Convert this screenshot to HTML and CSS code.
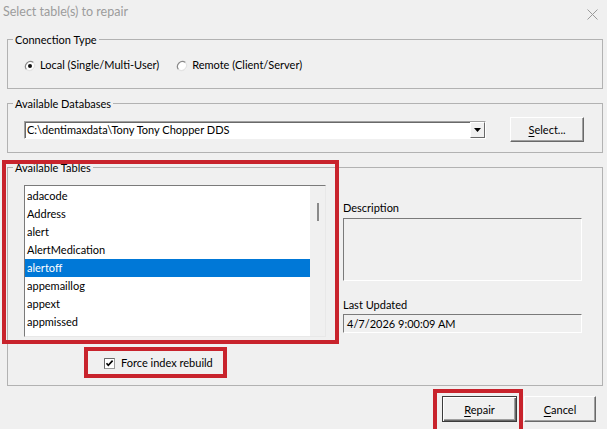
FILE: index.html
```html
<!DOCTYPE html>
<html>
<head>
<meta charset="utf-8">
<link rel="stylesheet" href="styles.css">
</head>
<body>
<div class="window">
  <div class="titlebar">
    <span class="title">Select table(s) to repair</span>
    <svg class="close" width="11" height="11" viewBox="0 0 11 11"><path d="M0.5 0.5L10.5 10.5M10.5 0.5L0.5 10.5" stroke="#9a9a9a" stroke-width="1" fill="none"/></svg>
  </div>
  <div class="content">
    <fieldset class="group g1">
      <legend>Connection Type</legend>
      <div class="radios">
        <label class="radio"><svg class="rb" width="12" height="12" viewBox="0 0 12 12"><circle cx="6" cy="6" r="5" fill="#fff"/><path d="M2.5 9.5A5 5 0 0 1 9.5 2.5" stroke="#8a8a8a" stroke-width="1.2" fill="none"/><path d="M9.5 2.5A5 5 0 0 1 2.5 9.5" stroke="#e4e4e4" stroke-width="1.2" fill="none"/><circle cx="6" cy="6" r="2" fill="#111"/></svg>Local (Single/Multi-User)</label>
        <label class="radio"><svg class="rb" width="12" height="12" viewBox="0 0 12 12"><circle cx="6" cy="6" r="5" fill="#fff"/><path d="M2.5 9.5A5 5 0 0 1 9.5 2.5" stroke="#8a8a8a" stroke-width="1.2" fill="none"/><path d="M9.5 2.5A5 5 0 0 1 2.5 9.5" stroke="#e4e4e4" stroke-width="1.2" fill="none"/></svg>Remote (Client/Server)</label>
      </div>
    </fieldset>
    <fieldset class="group g2">
      <legend>Available Databases</legend>
      <div class="dbrow">
        <div class="combo">
          <span class="combo-text">C:\dentimaxdata\Tony Tony Chopper DDS</span>
          <span class="combo-btn"><svg width="7" height="4" viewBox="0 0 7 4"><path d="M0 0H7L3.5 4Z" fill="#000"/></svg></span>
        </div>
        <button class="btn select"><u>S</u>elect...</button>
      </div>
    </fieldset>
    <fieldset class="group g3">
      <legend>Available Tables</legend>
      <div class="tables">
        <div class="listbox">
          <ul class="items">
            <li>adacode</li>
            <li>Address</li>
            <li>alert</li>
            <li>AlertMedication</li>
            <li class="sel">alertoff</li>
            <li>appemaillog</li>
            <li>appext</li>
            <li>appmissed</li>
          </ul>
          <div class="vscroll"><span class="thumb"></span></div>
        </div>
        <div class="details">
          <div class="lbl">Description</div>
          <div class="field desc"></div>
          <div class="lbl lbl2">Last Updated</div>
          <div class="field upd">4/7/2026 9:00:09 AM</div>
        </div>
      </div>
      <label class="check"><svg class="cb" width="11" height="11" viewBox="0 0 11 11"><rect x="0.5" y="0.5" width="10" height="10" fill="#fff" stroke="#9a9a9a"/><path d="M0.5 10.5V0.5H10.5" stroke="#6a6a6a" fill="none"/><path d="M2.5 5.2L4.3 7.3L8.6 2.6" stroke="#000" stroke-width="1.6" fill="none"/></svg>Force index rebuild</label>
    </fieldset>
    <div class="buttons">
      <button class="btn default"><u>R</u>epair</button>
      <button class="btn cancel"><u>C</u>ancel</button>
    </div>
  </div>
  <div class="mark m1"></div>
  <div class="mark m2"></div>
  <div class="mark m3"></div>
</div>
</body>
</html>
```
FILE: styles.css
```css
* { box-sizing: border-box; }
html, body { margin: 0; padding: 0; }
body {
  width: 607px;
  height: 429px;
  overflow: hidden;
  background: #f0f0f0;
  font-family: "Lato", "Noto Sans", "Liberation Sans", sans-serif;
  font-size: 11px;
  color: #000;
}
.window {
  position: relative;
  width: 607px;
  height: 429px;
  overflow: hidden;
  background: #f0f0f0;
}
.titlebar {
  height: 30px;
  display: flex;
  align-items: flex-start;
  justify-content: space-between;
  padding: 3px 9px 0 3px;
}
.title {
  font-size: 12.5px;
  line-height: 18px;
  color: #9c9c9c;
}
.close { margin-top: 6px; }
.content {
  padding: 0 4px 0 7px;
  display: flex;
  flex-direction: column;
}
.group {
  margin: 0;
  border: 1px solid #b2b2b2;
  padding: 0 18px 0 16px;
  min-width: 0;
}
.group legend {
  padding: 2px 2px 0;
  margin-left: -11px;
  line-height: 16px;
}
.g1 { padding-top: 9px; padding-bottom: 15px; }
.g2 { margin-top: 5px; padding-top: 5px; padding-bottom: 10px; }
.g3 { margin-top: 5px; padding-top: 9px; padding-bottom: 14px; }

.radios { display: flex; align-items: center; height: 16px; gap: 17px; }
.radio { display: flex; align-items: center; gap: 4px; line-height: 16px; }
.rb { display: block; margin-top: 1px; }

.dbrow { display: flex; align-items: center; height: 25px; }
.combo {
  width: 463px;
  height: 18px;
  background: #fff;
  border-top: 1px solid #a0a0a0;
  border-left: 1px solid #a0a0a0;
  border-right: 1px solid #fff;
  border-bottom: 1px solid #fff;
  box-shadow: inset 1px 1px 0 #696969;
  display: flex;
  align-items: center;
  justify-content: space-between;
  padding-left: 2px;
}
.combo-text { line-height: 16px; white-space: nowrap; }
.combo-btn {
  width: 15px;
  height: 16px;
  background: #f0f0f0;
  border: 1px solid;
  border-color: #fff #696969 #696969 #fff;
  display: flex;
  align-items: center;
  justify-content: center;
}
.combo-btn svg { display: block; }

.btn {
  font-family: inherit;
  font-size: 11px;
  color: #000;
  background: #f0f0f0;
  border: 1px solid;
  border-color: #fff #696969 #696969 #fff;
  box-shadow: inset -1px -1px 0 #a0a0a0;
  padding: 0;
  margin: 0;
}
.btn u { text-decoration: underline; text-underline-offset: 2px; }
.select { width: 74px; height: 25px; margin-left: 24px; }

.tables { display: flex; align-items: flex-start; }
.listbox {
  width: 302px;
  height: 152px;
  background: #fff;
  border-top: 1px solid #7a7a7a;
  border-left: 1px solid #7a7a7a;
  border-right: 1px solid #e8e8e8;
  border-bottom: 1px solid #e8e8e8;
  display: flex;
  overflow: hidden;
}
.items {
  list-style: none;
  margin: 0;
  padding: 1px 0 0;
  width: 285px;
  flex: none;
}
.items li {
  height: 18px;
  line-height: 18px;
  padding-left: 2px;
  white-space: nowrap;
}
.items li.sel { background: #0078d7; color: #fff; }
.vscroll {
  flex: 1;
  background: #f0f0f0;
  display: flex;
  justify-content: center;
  padding-top: 17px;
}
.thumb { display: block; width: 2px; height: 18px; background: #8a8a8a; }

.details { margin-left: 17px; margin-top: 15px; width: 239px; }
.lbl { line-height: 16px; height: 16px; }
.lbl2 { margin-top: 16px; }
.field {
  margin-top: 2px;
  border-top: 1px solid #7a7a7a;
  border-left: 1px solid #7a7a7a;
  border-right: 1px solid #fff;
  border-bottom: 1px solid #fff;
  background: #f0f0f0;
}
.desc { height: 63px; }
.upd { height: 19px; line-height: 17px; padding-left: 3px; margin-top: 1px; }

.check {
  display: flex;
  align-items: center;
  gap: 6px;
  margin-top: 18px;
  margin-left: 80px;
  height: 16px;
  line-height: 16px;
}
.cb { display: block; }

.buttons {
  display: flex;
  justify-content: flex-end;
  gap: 7px;
  margin-top: 10px;
  padding-right: 7px;
}
.buttons .btn { height: 26px; }
.default {
  width: 75px;
  border: 1px solid #3c3c3c;
  box-shadow: inset 1px 1px 0 #fff, inset -1px -1px 0 #696969, inset -2px -2px 0 #a0a0a0;
}
.cancel { width: 72px; }

.mark {
  position: absolute;
  border: 4px solid #c8232c;
}
.m1 { left: 2px; top: 160px; width: 337px; height: 184px; }
.m2 { left: 84px; top: 347px; width: 143px; height: 31px; }
.m3 { left: 433px; top: 389px; width: 90px; height: 44px; }
```
